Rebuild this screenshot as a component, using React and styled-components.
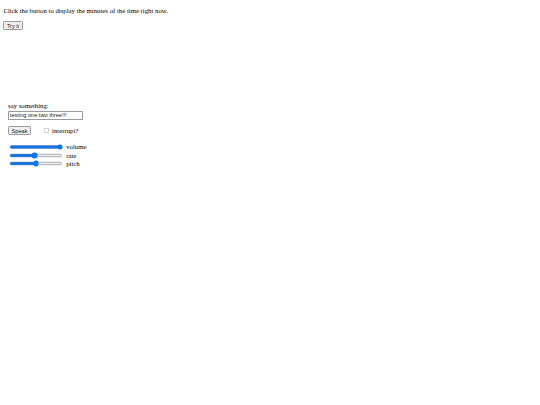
import React, { useState } from "react";
import styled, { createGlobalStyle } from "styled-components";

const Global = createGlobalStyle`
  html, body { margin: 0; padding: 0; background: #fff; }
  body { font-family: "Liberation Serif", "Times New Roman", serif; color: #000; }
`;

const Page = styled.div`
  zoom: 0.421875;
  width: 1280px;
  min-height: 960px;
  padding: 8px;
  box-sizing: border-box;
  font-size: 16px;
  line-height: normal;
`;

const Intro = styled.p`
  margin: 8px 0 18px;
`;

const Button = styled.button`
  font-family: "Liberation Sans", Arial, sans-serif;
  font-size: 13.333px;
  padding: 1px 6px;
  border: 1px solid #9a9a9a;
  border-radius: 3px;
  background: #efefef;
  color: #222;
  height: 21px;
`;

const Demo = styled.p`
  margin: 16px 0;
  min-height: 137px;
`;

const Speech = styled.div`
  margin-left: 11px;
  display: flex;
  flex-direction: column;
  align-items: flex-start;
`;

const Prompt = styled.div`
  margin-bottom: 6px;
`;

const TextInput = styled.input`
  font-family: "Liberation Sans", Arial, sans-serif;
  font-size: 13.333px;
  width: 178px;
  height: 21px;
  box-sizing: border-box;
  padding: 1px 2px;
  border: 1px solid #9a9a9a;
  border-radius: 2px;
  margin: 0 0 15px;
  color: #222;
`;

const ControlRow = styled.div`
  display: flex;
  align-items: center;
  margin-bottom: 18px;
`;

const CheckLabel = styled.label`
  display: flex;
  align-items: center;
  margin-left: 30px;
`;

const Check = styled.input`
  margin: 0 7px 0 0;
  width: 13px;
  height: 13px;
`;

const SliderRow = styled.label`
  display: flex;
  align-items: center;
  height: 20px;
`;

const Range = styled.input`
  width: 129px;
  margin: 2px;
  accent-color: #0075ff;
`;

const SliderLabel = styled.span`
  margin-left: 5px;
`;

export default function App() {
  const [text, setText] = useState("testing one two three!!!");
  const [volume, setVolume] = useState(1);
  const [rate, setRate] = useState(1);
  const [pitch, setPitch] = useState(1);
  const [demo, setDemo] = useState("");
  return (
    <>
      <Global />
      <Page>
        <Intro>Click the button to display the minutes of the time right now.</Intro>
        <Button onClick={() => setDemo(String(new Date().getMinutes()))}>Try it</Button>
        <Demo>{demo}</Demo>
        <Speech>
          <Prompt>say something:</Prompt>
          <TextInput type="text" value={text} onChange={(e) => setText(e.target.value)} />
          <ControlRow>
            <Button>Speak</Button>
            <CheckLabel>
              <Check type="checkbox" />
              interrupt?
            </CheckLabel>
          </ControlRow>
          <SliderRow>
            <Range type="range" min="0" max="1" step="0.01" value={volume} onChange={(e) => setVolume(e.target.value)} />
            <SliderLabel>volume</SliderLabel>
          </SliderRow>
          <SliderRow>
            <Range type="range" min="0.1" max="2" step="0.01" value={rate} onChange={(e) => setRate(e.target.value)} />
            <SliderLabel>rate</SliderLabel>
          </SliderRow>
          <SliderRow>
            <Range type="range" min="0" max="2" step="0.01" value={pitch} onChange={(e) => setPitch(e.target.value)} />
            <SliderLabel>pitch</SliderLabel>
          </SliderRow>
        </Speech>
      </Page>
    </>
  );
}
